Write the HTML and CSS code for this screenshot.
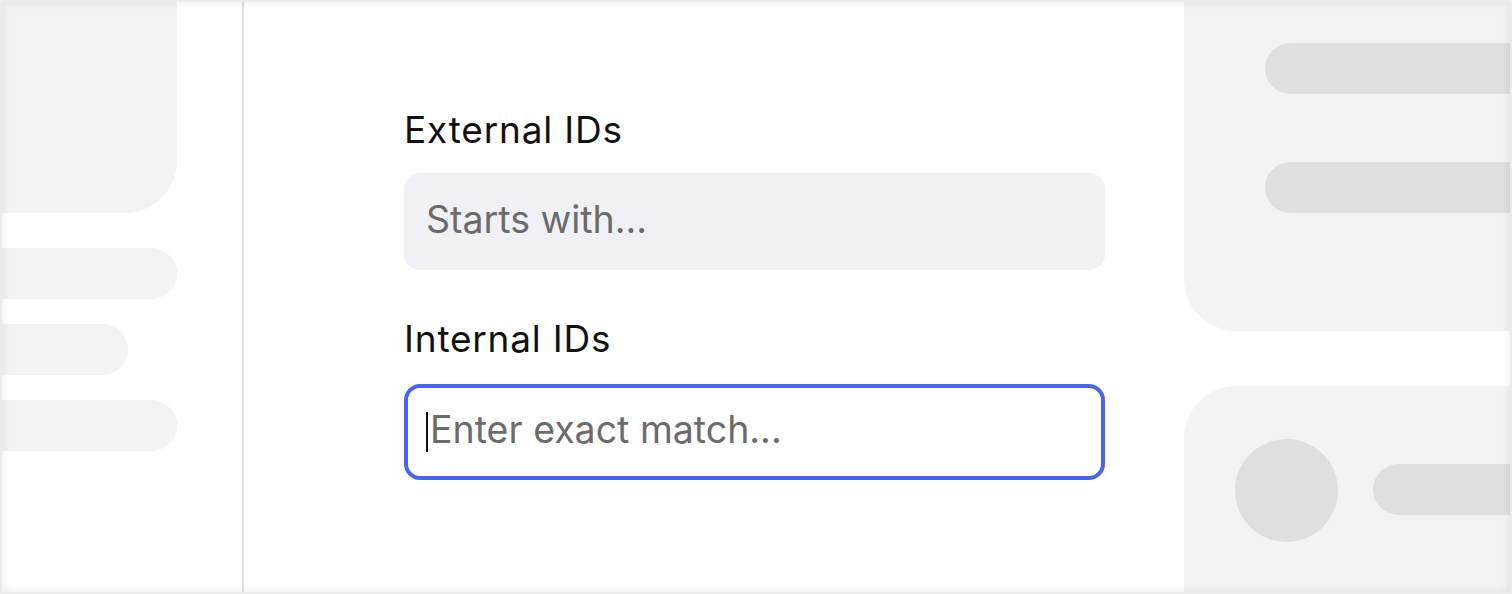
FILE: index.html
```html
<!DOCTYPE html>
<html>
<head>
<meta charset="utf-8">
<link rel="stylesheet" href="styles.css">
</head>
<body>
<div class="frame">
  <aside class="left">
    <div class="sk-box"></div>
    <div class="sk-pill long"></div>
    <div class="sk-pill short"></div>
    <div class="sk-pill long"></div>
  </aside>
  <main class="center">
    <div class="form">
      <label class="label">External IDs</label>
      <div class="field">
        <span class="placeholder">Starts with...</span>
      </div>
      <label class="label second">Internal IDs</label>
      <div class="field focused">
        <span class="caret"></span>
        <span class="placeholder">Enter exact match...</span>
      </div>
    </div>
  </main>
  <aside class="right">
    <div class="card-top">
      <div class="bar"></div>
      <div class="bar"></div>
    </div>
    <div class="card-bottom">
      <div class="avatar"></div>
      <div class="bar small"></div>
    </div>
  </aside>
  <div class="vignette"></div>
</div>
</body>
</html>
```

FILE: styles.css
```css
* { box-sizing: border-box; }
html, body { margin: 0; padding: 0; background: #ffffff; }
body { font-family: Inter, "Noto Sans", sans-serif; }

.frame {
  position: relative;
  width: 1512px;
  height: 594px;
  border: 2px solid #ebebeb;
  display: flex;
  overflow: hidden;
  background: #ffffff;
}

.vignette {
  position: absolute;
  inset: 0;
  pointer-events: none;
  box-shadow: inset 0 0 10px rgba(0, 0, 0, 0.09);
}

/* Left skeleton column */
.left {
  width: 242px;
  flex: none;
  border-right: 2px solid #e3e3e3;
  display: flex;
  flex-direction: column;
  align-items: flex-start;
}
.sk-box {
  width: 175px;
  height: 211px;
  background: #f3f3f3;
  border-radius: 0 0 52px 0;
}
.sk-pill {
  height: 51px;
  background: #f3f3f3;
  border-radius: 0 26px 26px 0;
  margin-top: 25px;
}
.sk-box + .sk-pill { margin-top: 35px; }
.sk-pill.long { width: 175px; }
.sk-pill.short { width: 126px; }

/* Center form */
.center {
  width: 940px;
  flex: none;
  padding-left: 160px;
  padding-top: 104px;
}
.form {
  width: 701px;
  display: flex;
  flex-direction: column;
}
.label {
  font-size: 37px;
  line-height: 48px;
  color: #111111;
  font-weight: 400;
  letter-spacing: 0.8px;
}
.label.second { margin-top: 45px; }
.field {
  margin-top: 19px;
  height: 97px;
  border-radius: 16px;
  background: #f0f1f4;
  display: flex;
  align-items: center;
  padding-left: 22px;
  padding-bottom: 4px;
}
.field.focused {
  height: 96px;
  margin-top: 21px;
  background: #ffffff;
  border: 4px solid #4a64f2;
  padding-left: 18px;
  padding-bottom: 0;
}
.placeholder {
  font-size: 37.5px;
  color: #6b6b6b;
  line-height: 1;
}
.focused .placeholder { margin-top: -4px; }
.caret {
  width: 2px;
  height: 40px;
  background: #111111;
  margin-right: 2px;
}

/* Right skeleton column */
.right {
  flex: 1;
  display: flex;
  flex-direction: column;
  overflow: hidden;
}
.card-top {
  height: 329px;
  background: #f3f3f3;
  border-radius: 0 0 0 52px;
  padding-top: 41px;
  padding-left: 81px;
  display: flex;
  flex-direction: column;
  gap: 68px;
}
.bar {
  height: 51px;
  background: #dfdfdf;
  border-radius: 26px 0 0 26px;
  width: 300px;
}
.card-bottom {
  margin-top: 55px;
  flex: 1;
  background: #f3f3f3;
  border-radius: 52px 0 0 0;
  display: flex;
  align-items: flex-start;
  padding-left: 51px;
  padding-top: 53px;
}
.avatar {
  width: 103px;
  height: 103px;
  border-radius: 50%;
  background: #dfdfdf;
  flex: none;
}
.bar.small {
  margin-left: 35px;
  margin-top: 25px;
  width: 200px;
}
```
